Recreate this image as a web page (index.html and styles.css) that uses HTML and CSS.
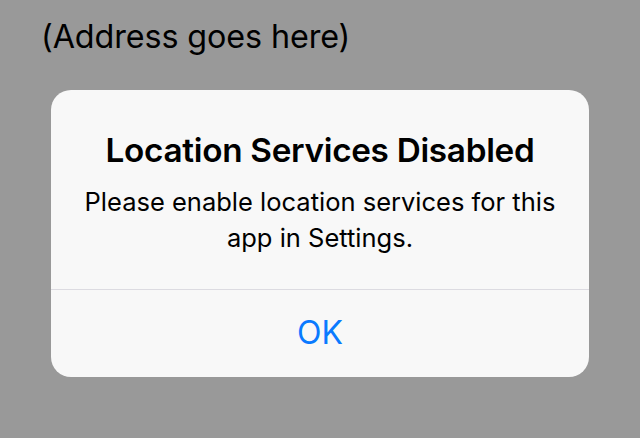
FILE: index.html
```html
<!DOCTYPE html>
<html>
<head>
<meta charset="utf-8">
<link rel="stylesheet" href="styles.css">
</head>
<body>
<div class="screen">
  <div class="address">(Address goes here)</div>
  <div class="alert">
    <div class="alert-body">
      <div class="alert-title">Location Services Disabled</div>
      <div class="alert-message">Please enable location services for this app in Settings.</div>
    </div>
    <div class="alert-actions">
      <div class="alert-button">OK</div>
    </div>
  </div>
</div>
</body>
</html>
```

FILE: styles.css
```css
html, body {
  margin: 0;
  padding: 0;
  width: 640px;
  height: 438px;
  background: #999999;
  overflow: hidden;
  font-family: Inter, "Liberation Sans", sans-serif;
}
.screen {
  display: flex;
  flex-direction: column;
  padding: 15px 0 0 0;
}
.address {
  margin-left: 41px;
  font-size: 32.3px;
  line-height: 44px;
  color: #000;
  letter-spacing: -0.1px;
}
.alert {
  margin: 31px 0 0 51px;
  width: 538px;
  height: 287px;
  background: #f8f8f8;
  border-radius: 20px;
  display: flex;
  flex-direction: column;
  overflow: hidden;
}
.alert-body {
  height: 200px;
  box-sizing: border-box;
  padding: 38px 10px 0;
  text-align: center;
  border-bottom: 1px solid #dcdbe1;
}
.alert-title {
  font-size: 33.3px;
  font-weight: 600;
  line-height: 44px;
  color: #000;
  letter-spacing: -0.3px;
}
.alert-message {
  margin-top: 12px;
  font-size: 25.5px;
  line-height: 36px;
  color: #000;
}
.alert-actions {
  flex: 1;
  display: flex;
  align-items: center;
  justify-content: center;
}
.alert-button {
  font-size: 32px;
  color: #0a7aff;
  margin-top: -2px;
}
```
